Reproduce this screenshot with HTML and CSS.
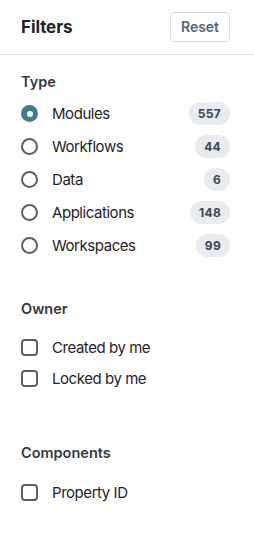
FILE: index.html
```html
<!DOCTYPE html>
<html>
<head>
<meta charset="utf-8">
<link rel="stylesheet" href="styles.css">
</head>
<body>
<div class="panel">
  <header class="header">
    <h1 class="title">Filters</h1>
    <button class="reset">Reset</button>
  </header>

  <section class="section section-type">
    <h2 class="heading">Type</h2>
    <ul class="list list-radio">
      <li class="row"><span class="radio checked"></span><span class="label">Modules</span><span class="badge">557</span></li>
      <li class="row"><span class="radio"></span><span class="label">Workflows</span><span class="badge">44</span></li>
      <li class="row"><span class="radio"></span><span class="label">Data</span><span class="badge">6</span></li>
      <li class="row"><span class="radio"></span><span class="label">Applications</span><span class="badge">148</span></li>
      <li class="row"><span class="radio"></span><span class="label">Workspaces</span><span class="badge">99</span></li>
    </ul>
  </section>

  <section class="section section-owner">
    <h2 class="heading">Owner</h2>
    <ul class="list list-check">
      <li class="row row-check"><span class="checkbox"></span><span class="label">Created by me</span></li>
      <li class="row row-check"><span class="checkbox"></span><span class="label">Locked by me</span></li>
    </ul>
  </section>

  <section class="section section-components">
    <h2 class="heading">Components</h2>
    <ul class="list list-check">
      <li class="row row-check"><span class="checkbox"></span><span class="label">Property ID</span></li>
    </ul>
  </section>
</div>
</body>
</html>
```

FILE: styles.css
```css
* { box-sizing: border-box; }
html, body { margin: 0; padding: 0; background: #ffffff; }
body {
  font-family: Inter, "Noto Sans", "Liberation Sans", sans-serif;
  color: #1f2328;
}
.panel { width: 254px; }
.header {
  height: 55px;
  display: flex;
  align-items: center;
  justify-content: space-between;
  padding: 0 24px 1px 21px;
  border-bottom: 1px solid #e3e7eb;
}
.title {
  margin: 0;
  font-size: 17px;
  font-weight: 700;
  color: #1e2226;
  letter-spacing: -0.1px;
}
.reset {
  width: 60px;
  height: 30px;
  border: 1px solid #d6dde3;
  border-radius: 4px;
  background: #fff;
  font-family: inherit;
  font-size: 14px;
  font-weight: 600;
  color: #4b6675;
  padding: 0;
}
.section { padding: 0 24px 0 21px; }
.section-type { margin-top: 17px; }
.section-owner { margin-top: 37px; }
.section-components { margin-top: 49px; }
.heading {
  margin: 0;
  height: 20px;
  line-height: 20px;
  font-size: 14.5px;
  font-weight: 600;
  color: #343a42;
}
.list { list-style: none; margin: 0; padding: 0; }
.list-radio { margin-top: 5px; }
.list-check { margin-top: 13px; }
.section-components .list-check { margin-top: 14px; }
.row {
  height: 33px;
  display: flex;
  align-items: center;
}
.row-check { height: 31px; }
.label {
  margin-left: 14px;
  font-size: 15px;
  letter-spacing: -0.45px;
  color: #1f2328;
  flex: 1;
}
.radio {
  width: 17px;
  height: 17px;
  border-radius: 50%;
  border: 2px solid #5b6066;
  flex: none;
  position: relative;
}
.radio.checked {
  border: none;
  background: #3d7f87;
}
.radio.checked::after {
  content: "";
  position: absolute;
  left: 5.5px;
  top: 5.5px;
  width: 6px;
  height: 6px;
  border-radius: 50%;
  background: #fff;
}
.checkbox {
  width: 17px;
  height: 17px;
  border: 2px solid #5b6066;
  border-radius: 4px;
  flex: none;
}
.badge {
  height: 23px;
  line-height: 23px;
  padding: 0 9px;
  border-radius: 12px;
  background: #e8ecf1;
  font-size: 12px;
  font-weight: 700;
  color: #3c4658;
  letter-spacing: 0.3px;
}
```
